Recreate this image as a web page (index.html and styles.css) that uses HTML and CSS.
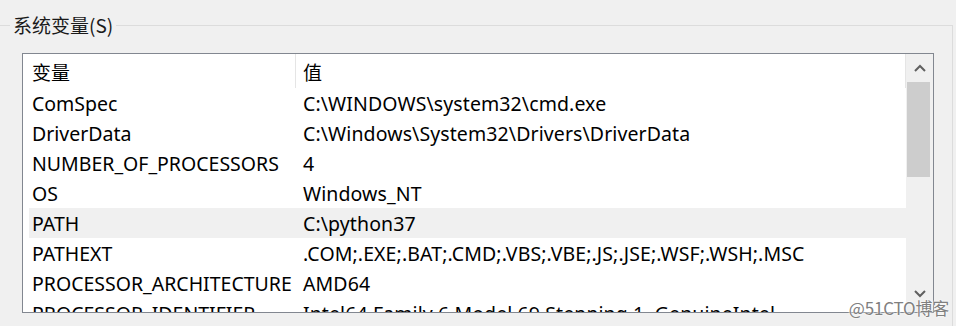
FILE: index.html
```html
<!DOCTYPE html>
<html lang="zh-CN">
<head>
<meta charset="utf-8">
<link rel="stylesheet" href="styles.css">
</head>
<body>
<div class="page">
  <fieldset class="group">
    <legend class="group-title">系统变量(S)</legend>
    <div class="listbox">
      <div class="list">
        <div class="head">
          <div class="hcell name">变量</div>
          <div class="hcell value">值</div>
        </div>
        <div class="rows">
          <div class="row"><span class="c1">ComSpec</span><span class="c2">C:\WINDOWS\system32\cmd.exe</span></div>
          <div class="row"><span class="c1">DriverData</span><span class="c2">C:\Windows\System32\Drivers\DriverData</span></div>
          <div class="row"><span class="c1">NUMBER_OF_PROCESSORS</span><span class="c2">4</span></div>
          <div class="row"><span class="c1">OS</span><span class="c2">Windows_NT</span></div>
          <div class="row sel"><span class="c1">PATH</span><span class="c2">C:\python37</span></div>
          <div class="row"><span class="c1">PATHEXT</span><span class="c2">.COM;.EXE;.BAT;.CMD;.VBS;.VBE;.JS;.JSE;.WSF;.WSH;.MSC</span></div>
          <div class="row"><span class="c1">PROCESSOR_ARCHITECTURE</span><span class="c2">AMD64</span></div>
          <div class="row"><span class="c1">PROCESSOR_IDENTIFIER</span><span class="c2">Intel64 Family 6 Model 69 Stepping 1, GenuineIntel</span></div>
        </div>
      </div>
      <div class="scrollbar">
        <div class="arrow up"><svg width="12" height="8" viewBox="0 0 12 8"><path d="M1 7 L6 2 L11 7" fill="none" stroke="#606060" stroke-width="2"/></svg></div>
        <div class="track"><div class="thumb"></div></div>
        <div class="arrow down"><svg width="12" height="8" viewBox="0 0 12 8"><path d="M1 1 L6 6 L11 1" fill="none" stroke="#606060" stroke-width="2"/></svg></div>
      </div>
    </div>
  </fieldset>
  <div class="watermark">@51CTO博客</div>
</div>
</body>
</html>
```
FILE: styles.css
```css
html, body {
  margin: 0;
  padding: 0;
}
body {
  background: #f0f0f0;
  font-family: "Noto Sans", "Noto Sans CJK SC", sans-serif;
  color: #000;
  width: 956px;
  height: 326px;
  overflow: hidden;
}
.page {
  position: relative;
  width: 956px;
  height: 326px;
  padding-top: 15px;
  box-sizing: border-box;
}
.group {
  margin: 0;
  width: 953px;
  height: 330px;
  box-sizing: border-box;
  border: none;
  border-top: 1px solid #dcdcdc;
  border-right: 1px solid #dcdcdc;
  padding: 0;
}
.group-title {
  margin-left: 10px;
  padding: 0 3px;
  font-size: 19px;
  line-height: 20px;
  font-family: "Noto Sans CJK SC", sans-serif;
  color: #1a1a1a;
}
.listbox {
  display: flex;
  margin: 18px 0 0 22px;
  width: 912px;
  height: 260px;
  box-sizing: border-box;
  border: 1px solid #828790;
  background: #fff;
  overflow: hidden;
}
.list {
  flex: 1;
  padding-left: 6px;
  overflow: hidden;
}
.head {
  display: flex;
  height: 34px;
  align-items: stretch;
}
.hcell {
  font-family: "Noto Sans CJK SC", sans-serif;
  font-size: 19px;
  line-height: 36px;
  padding-left: 3px;
}
.hcell.name {
  width: 263px;
  border-right: 1px solid #e5e5e5;
}
.hcell.value {
  flex: 1;
  padding-left: 7px;
  border-right: 1px solid #e5e5e5;
}
.rows {
  display: flex;
  flex-direction: column;
}
.row {
  display: flex;
  height: 30px;
  line-height: 31px;
  font-size: 19.5px;
  white-space: nowrap;
}
.row.sel {
  background: #f0f0f0;
}
.c1 {
  width: 264px;
  padding-left: 3px;
  flex: none;
}
.c2 {
  padding-left: 7px;
  letter-spacing: 0.1px;
}
.scrollbar {
  width: 27px;
  flex: none;
  background: #f0f0f0;
  display: flex;
  flex-direction: column;
}
.arrow {
  height: 28px;
  display: flex;
  align-items: center;
  justify-content: center;
}
.arrow.down {
  align-items: flex-start;
  padding-top: 6px;
  box-sizing: border-box;
}
.track {
  flex: 1;
  padding: 0 3px 0 1px;
}
.thumb {
  height: 95px;
  background: #cdcdcd;
}
.watermark {
  position: absolute;
  right: 7px;
  bottom: 6px;
  font-family: "Noto Sans CJK SC", sans-serif;
  font-size: 17px;
  letter-spacing: -0.2px;
  color: #808080;
  text-shadow: 0 0 2px #fff, 0 0 2px #fff;
}
```
